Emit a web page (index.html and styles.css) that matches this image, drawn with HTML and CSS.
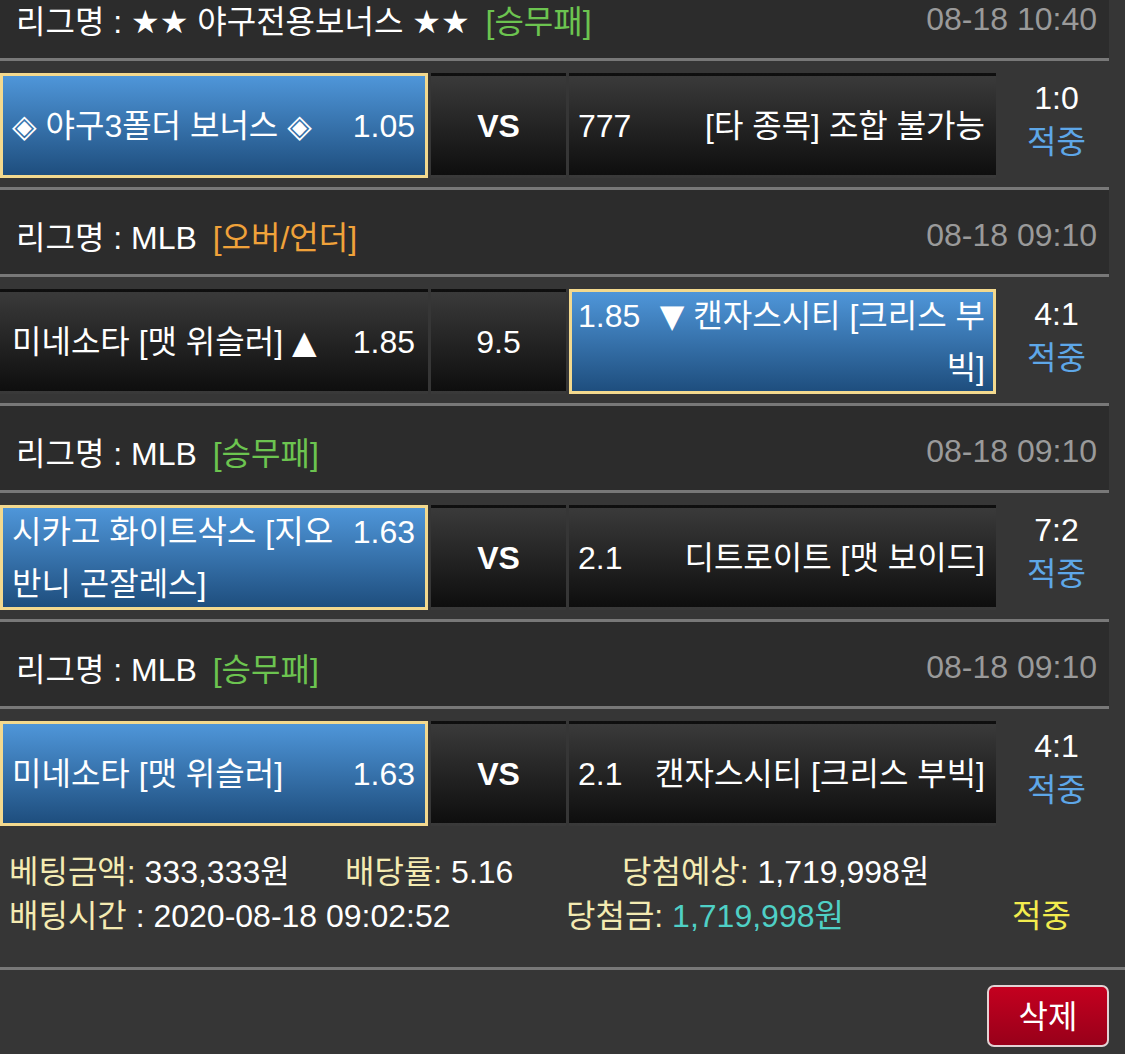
FILE: index.html
```html
<!DOCTYPE html>
<html lang="ko">
<head>
<meta charset="utf-8">
<title>배팅내역</title>
<link rel="stylesheet" href="styles.css">
</head>
<body>
<div class="page">
  <section class="game">
    <div class="league">
      <div class="league-name">리그명 : <span class="sym">★★</span> 야구전용보너스 <span class="sym">★★</span> <span class="type win">[승무패]</span></div>
      <div class="league-time">08-18 10:40</div>
    </div>
    <div class="match">
      <div class="cell side home sel">
        <div class="inner"><span class="team"><span class="sym">◈</span> 야구3폴더 보너스 <span class="sym">◈</span></span><span class="odds">1.05</span></div>
      </div>
      <div class="cell mid"><b>VS</b></div>
      <div class="cell side away">
        <div class="inner"><span class="odds">777</span><span class="team">[타 종목] 조합 불가능</span></div>
      </div>
      <div class="score"><span>1:0</span><span class="hit">적중</span></div>
    </div>
  </section>

  <section class="game">
    <div class="league">
      <div class="league-name">리그명 : MLB <span class="type ou">[오버/언더]</span></div>
      <div class="league-time">08-18 09:10</div>
    </div>
    <div class="match">
      <div class="cell side home">
        <div class="inner"><span class="team">미네소타 [맷 위슬러] <span class="sym">▲</span></span><span class="odds">1.85</span></div>
      </div>
      <div class="cell mid">9.5</div>
      <div class="cell side away sel">
        <div class="inner"><span class="odds">1.85</span><span class="team"><span class="sym">▼</span> 캔자스시티 [크리스 부빅]</span></div>
      </div>
      <div class="score"><span>4:1</span><span class="hit">적중</span></div>
    </div>
  </section>

  <section class="game">
    <div class="league">
      <div class="league-name">리그명 : MLB <span class="type win">[승무패]</span></div>
      <div class="league-time">08-18 09:10</div>
    </div>
    <div class="match">
      <div class="cell side home sel">
        <div class="inner"><span class="team">시카고 화이트삭스 [지오반니 곤잘레스]</span><span class="odds">1.63</span></div>
      </div>
      <div class="cell mid"><b>VS</b></div>
      <div class="cell side away">
        <div class="inner"><span class="odds">2.1</span><span class="team">디트로이트 [맷 보이드]</span></div>
      </div>
      <div class="score"><span>7:2</span><span class="hit">적중</span></div>
    </div>
  </section>

  <section class="game">
    <div class="league">
      <div class="league-name">리그명 : MLB <span class="type win">[승무패]</span></div>
      <div class="league-time">08-18 09:10</div>
    </div>
    <div class="match">
      <div class="cell side home sel">
        <div class="inner"><span class="team">미네소타 [맷 위슬러]</span><span class="odds">1.63</span></div>
      </div>
      <div class="cell mid"><b>VS</b></div>
      <div class="cell side away">
        <div class="inner"><span class="odds">2.1</span><span class="team">캔자스시티 [크리스 부빅]</span></div>
      </div>
      <div class="score"><span>4:1</span><span class="hit">적중</span></div>
    </div>
  </section>

  <div class="summary">
    <div class="sum-line first">
      <div><span class="lbl">베팅금액:</span> 333,333원</div>
      <div><span class="lbl">배당률:</span> 5.16</div>
      <div><span class="lbl">당첨예상:</span> 1,719,998원</div>
    </div>
    <div class="sum-line second">
      <div><span class="lbl">배팅시간</span> : 2020-08-18 09:02:52</div>
      <div><span class="lbl">당첨금:</span> <span class="won">1,719,998원</span></div>
      <div class="result">적중</div>
    </div>
  </div>

  <div class="actions">
    <button class="btn-del" type="button">삭제</button>
  </div>
</div>
</body>
</html>
```

FILE: styles.css
```css
html, body {
  margin: 0;
  padding: 0;
  background: #363636;
}

body {
  font-family: "Liberation Sans", "Noto Sans CJK KR", sans-serif;
  font-size: 32px;
  color: #ffffff;
  overflow: hidden;
}

.page {
  margin-top: -26px;
}

.sym {
  font-family: "DejaVu Sans", sans-serif;
}

.game {
  width: 1109px;
}

.game + .game {
  border-top: 3px solid #787878;
}

.league {
  height: 87px;
  box-sizing: border-box;
  padding: 6px 12px 0 16px;
  background: #2c2c2c;
  border-bottom: 3px solid #787878;
  display: flex;
  align-items: center;
  justify-content: space-between;
  white-space: nowrap;
}

.type {
  margin-left: 7px;
}

.type.win {
  color: #6cc450;
}

.type.ou {
  color: #f0a23a;
}

.league-time {
  color: #9a9a9a;
}

.match {
  display: flex;
  padding: 12px 0 9px;
}

.cell {
  height: 105px;
  box-sizing: border-box;
  border: 3px solid transparent;
  background: linear-gradient(#3a3a3a, #0e0e0e);
  display: flex;
  align-items: center;
  line-height: 52px;
}

.cell.sel {
  border-color: #f3d98e;
  background: linear-gradient(#4f96d9, #1e4e7e);
}

.side {
  width: 428px;
}

.home {
  padding: 0 10px 0 9px;
}

.away {
  width: 427px;
  padding: 0 8px 0 6px;
}

.mid {
  width: 135px;
  margin: 0 3px;
  justify-content: center;
}

.mid b {
  font-weight: bold;
}

.inner {
  display: flex;
  align-items: flex-start;
  width: 100%;
}

.team {
  flex: 1;
  min-width: 0;
}

.odds {
  flex: none;
}

.home .odds {
  margin-left: 18px;
}

.away .odds {
  margin-right: 14px;
}

.away .team {
  text-align: right;
}

.score {
  flex: 1;
  display: flex;
  flex-direction: column;
  align-items: center;
  justify-content: center;
  line-height: 44px;
  padding-bottom: 12px;
  padding-left: 8px;
}

.score .hit {
  color: #5ea7e8;
}

.summary {
  padding: 15px 0 29px 9px;
  border-bottom: 3px solid #787878;
  line-height: 44px;
  white-space: nowrap;
}

.sum-line {
  display: grid;
}

.sum-line.first {
  grid-template-columns: 336px 277px auto;
}

.sum-line.second {
  grid-template-columns: 557px 446px auto;
}

.lbl {
  color: #f4ebb2;
}

.won {
  color: #4fd0c6;
}

.result {
  color: #f3ec4e;
}

.actions {
  display: flex;
  justify-content: flex-end;
  padding: 15px 16px 0 0;
}

.btn-del {
  width: 122px;
  height: 62px;
  box-sizing: border-box;
  border: 2px solid #e2d2d4;
  border-radius: 7px;
  background: linear-gradient(#c4001f, #98001a);
  color: #ffffff;
  font-family: "Liberation Sans", "Noto Sans CJK KR", sans-serif;
  font-size: 32px;
  padding: 0 0 4px;
}
```
